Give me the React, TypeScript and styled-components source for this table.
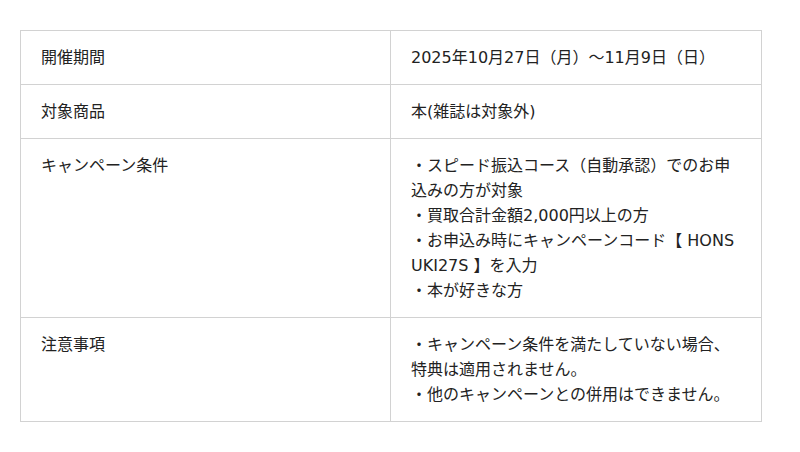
import React from "react";
import styled, { createGlobalStyle } from "styled-components";

const Global = createGlobalStyle`
  html, body { margin: 0; padding: 0; background: #fff; }
  body { font-family: "DejaVu Sans", "Noto Sans CJK JP", sans-serif; color: #222; }
`;

const Wrap = styled.div`
  padding: 30px 38px 0 20px;
`;

const Table = styled.table`
  width: 742px;
  border-collapse: collapse;
  table-layout: fixed;
`;

const Row = styled.tr``;

const Cell = styled.td<{ $label?: boolean }>`
  border: 1px solid #d2d2d2;
  padding: 14px 20px;
  font-size: 16px;
  line-height: 25px;
  vertical-align: top;
  word-break: break-all;
  width: ${(p) => (p.$label ? "329px" : "auto")};
`;

const Line = styled.div``;

const rows: { label: string; lines: string[] }[] = [
  { label: "開催期間", lines: ["2025年10月27日（月）〜11月9日（日）"] },
  { label: "対象商品", lines: ["本(雑誌は対象外)"] },
  {
    label: "キャンペーン条件",
    lines: [
      "・スピード振込コース（自動承認）でのお申込みの方が対象",
      "・買取合計金額2,000円以上の方",
      "・お申込み時にキャンペーンコード【 HONSUKI27S 】を入力",
      "・本が好きな方",
    ],
  },
  {
    label: "注意事項",
    lines: [
      "・キャンペーン条件を満たしていない場合、特典は適用されません。",
      "・他のキャンペーンとの併用はできません。",
    ],
  },
];

export default function App() {
  return (
    <>
      <Global />
      <Wrap>
        <Table>
          <tbody>
            {rows.map((r) => (
              <Row key={r.label}>
                <Cell $label>{r.label}</Cell>
                <Cell>
                  {r.lines.map((l) => (
                    <Line key={l}>{l}</Line>
                  ))}
                </Cell>
              </Row>
            ))}
          </tbody>
        </Table>
      </Wrap>
    </>
  );
}
